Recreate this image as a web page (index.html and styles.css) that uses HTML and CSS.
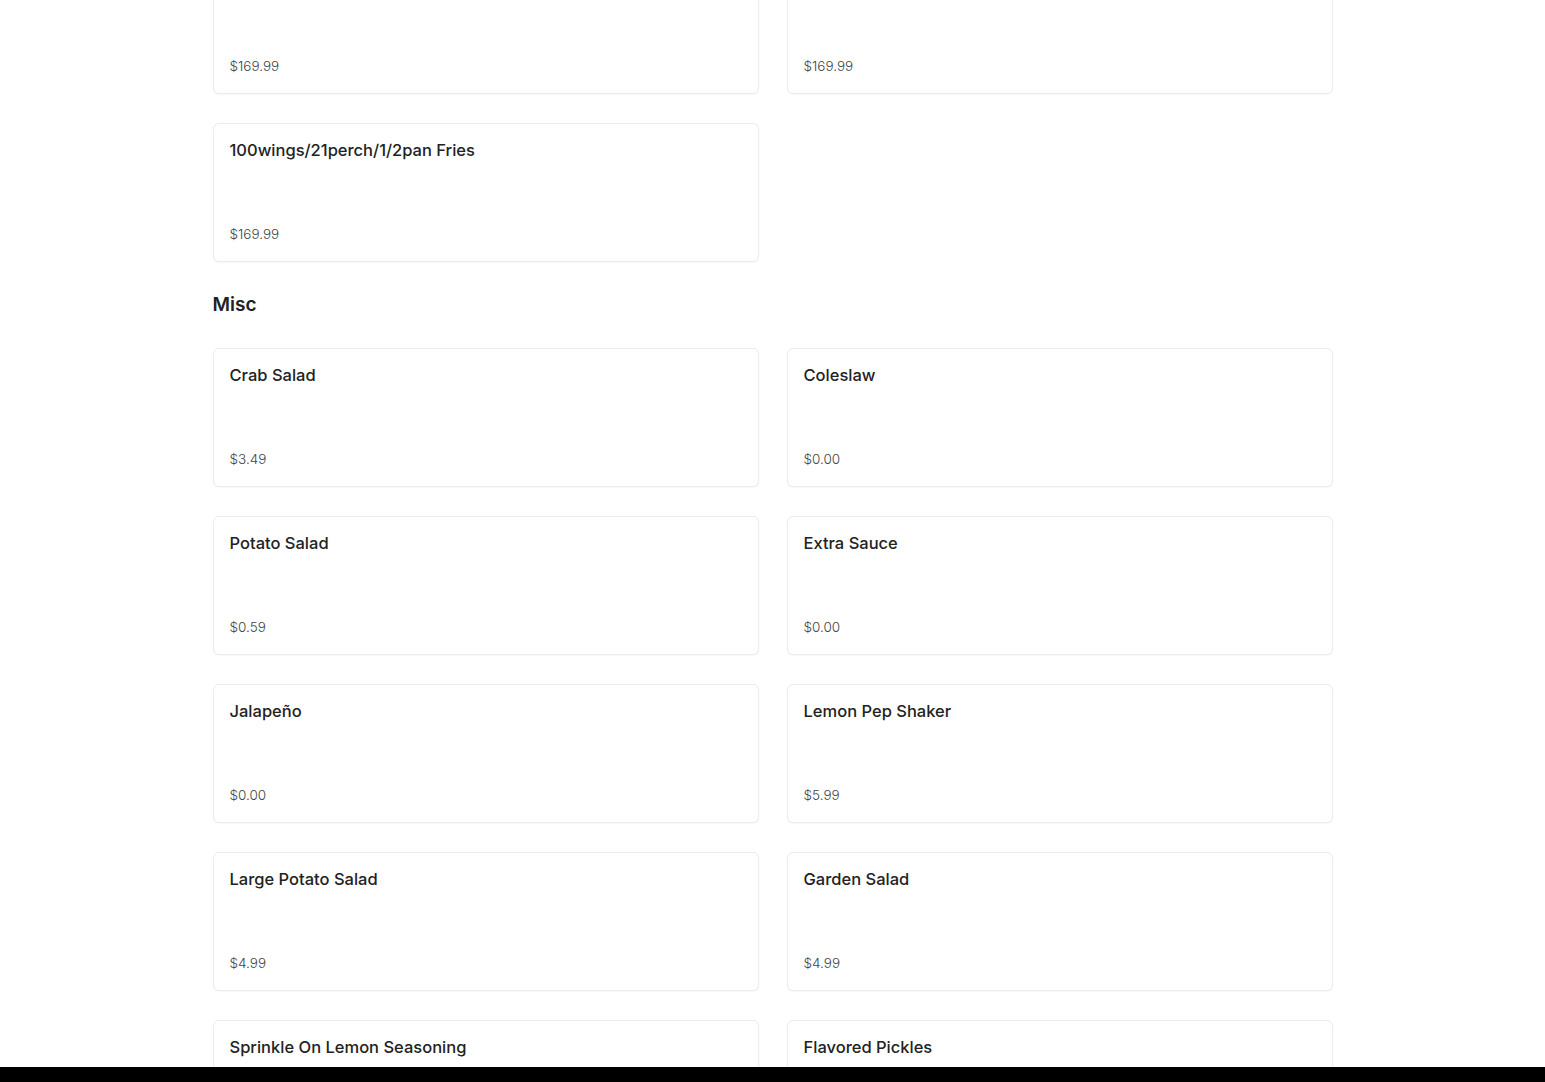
FILE: index.html
```html
<!DOCTYPE html>
<html lang="en">
<head>
    <meta charset="UTF-8">
    <meta name="viewport" content="width=device-width, initial-scale=1.0">
    <title>Menu</title>
    <link rel="stylesheet" href="styles.css">
</head>
<body>

<div class="menu">
    <div class="items items-first">
        <div class="item">
            <h3 class="item-name">100wings/21perch/Large Fries</h3>
            <span class="item-price">$169.99</span>
        </div>
        <div class="item">
            <h3 class="item-name">100wings/21perch/Large Fries</h3>
            <span class="item-price">$169.99</span>
        </div>
        <div class="item">
            <h3 class="item-name">100wings/21perch/1/2pan Fries</h3>
            <span class="item-price">$169.99</span>
        </div>
    </div>

    <h2 class="section-title">Misc</h2>

    <div class="items">
        <div class="item">
            <h3 class="item-name">Crab Salad</h3>
            <span class="item-price">$3.49</span>
        </div>
        <div class="item">
            <h3 class="item-name">Coleslaw</h3>
            <span class="item-price">$0.00</span>
        </div>
        <div class="item">
            <h3 class="item-name">Potato Salad</h3>
            <span class="item-price">$0.59</span>
        </div>
        <div class="item">
            <h3 class="item-name">Extra Sauce</h3>
            <span class="item-price">$0.00</span>
        </div>
        <div class="item">
            <h3 class="item-name">Jalapeño</h3>
            <span class="item-price">$0.00</span>
        </div>
        <div class="item">
            <h3 class="item-name">Lemon Pep Shaker</h3>
            <span class="item-price">$5.99</span>
        </div>
        <div class="item">
            <h3 class="item-name">Large Potato Salad</h3>
            <span class="item-price">$4.99</span>
        </div>
        <div class="item">
            <h3 class="item-name">Garden Salad</h3>
            <span class="item-price">$4.99</span>
        </div>
        <div class="item">
            <h3 class="item-name">Sprinkle On Lemon Seasoning</h3>
            <span class="item-price">$2.99</span>
        </div>
        <div class="item">
            <h3 class="item-name">Flavored Pickles</h3>
            <span class="item-price">$1.99</span>
        </div>
    </div>
</div>

<div class="bottom-bar"></div>

</body>
</html>
```

FILE: styles.css
```css
* {
    margin: 0;
    padding: 0;
    box-sizing: border-box;
}

body {
    font-family: 'Inter', 'Open Sans', sans-serif;
    background-color: #ffffff;
    color: #222;
    overflow: hidden;
    height: 100vh;
}

.menu {
    width: 1120px;
    margin: 0 auto;
}

.items {
    display: grid;
    grid-template-columns: 1fr 1fr;
    gap: 29px 28px;
}

/* page is scrolled: first row is cut at the top */
.items-first {
    margin-top: -45px;
}

.item {
    height: 139px;
    padding: 14px 16px 15px;
    border: 1px solid #ececec;
    border-radius: 6px;
    box-shadow: 0 1px 2px rgba(0, 0, 0, 0.04);
    display: flex;
    flex-direction: column;
    justify-content: space-between;
    background-color: #fff;
}

.item-name {
    font-size: 16.5px;
    font-weight: 500;
    line-height: 24px;
    color: #222;
}

.item-price {
    font-size: 13.5px;
    font-weight: 300;
    line-height: 24px;
    color: #444;
}

.section-title {
    font-size: 19px;
    font-weight: 600;
    line-height: 30px;
    margin: 28px 0 28px;
    color: #222;
}

.bottom-bar {
    position: fixed;
    left: 0;
    right: 0;
    bottom: 0;
    height: 15px;
    background-color: #000;
}
```
